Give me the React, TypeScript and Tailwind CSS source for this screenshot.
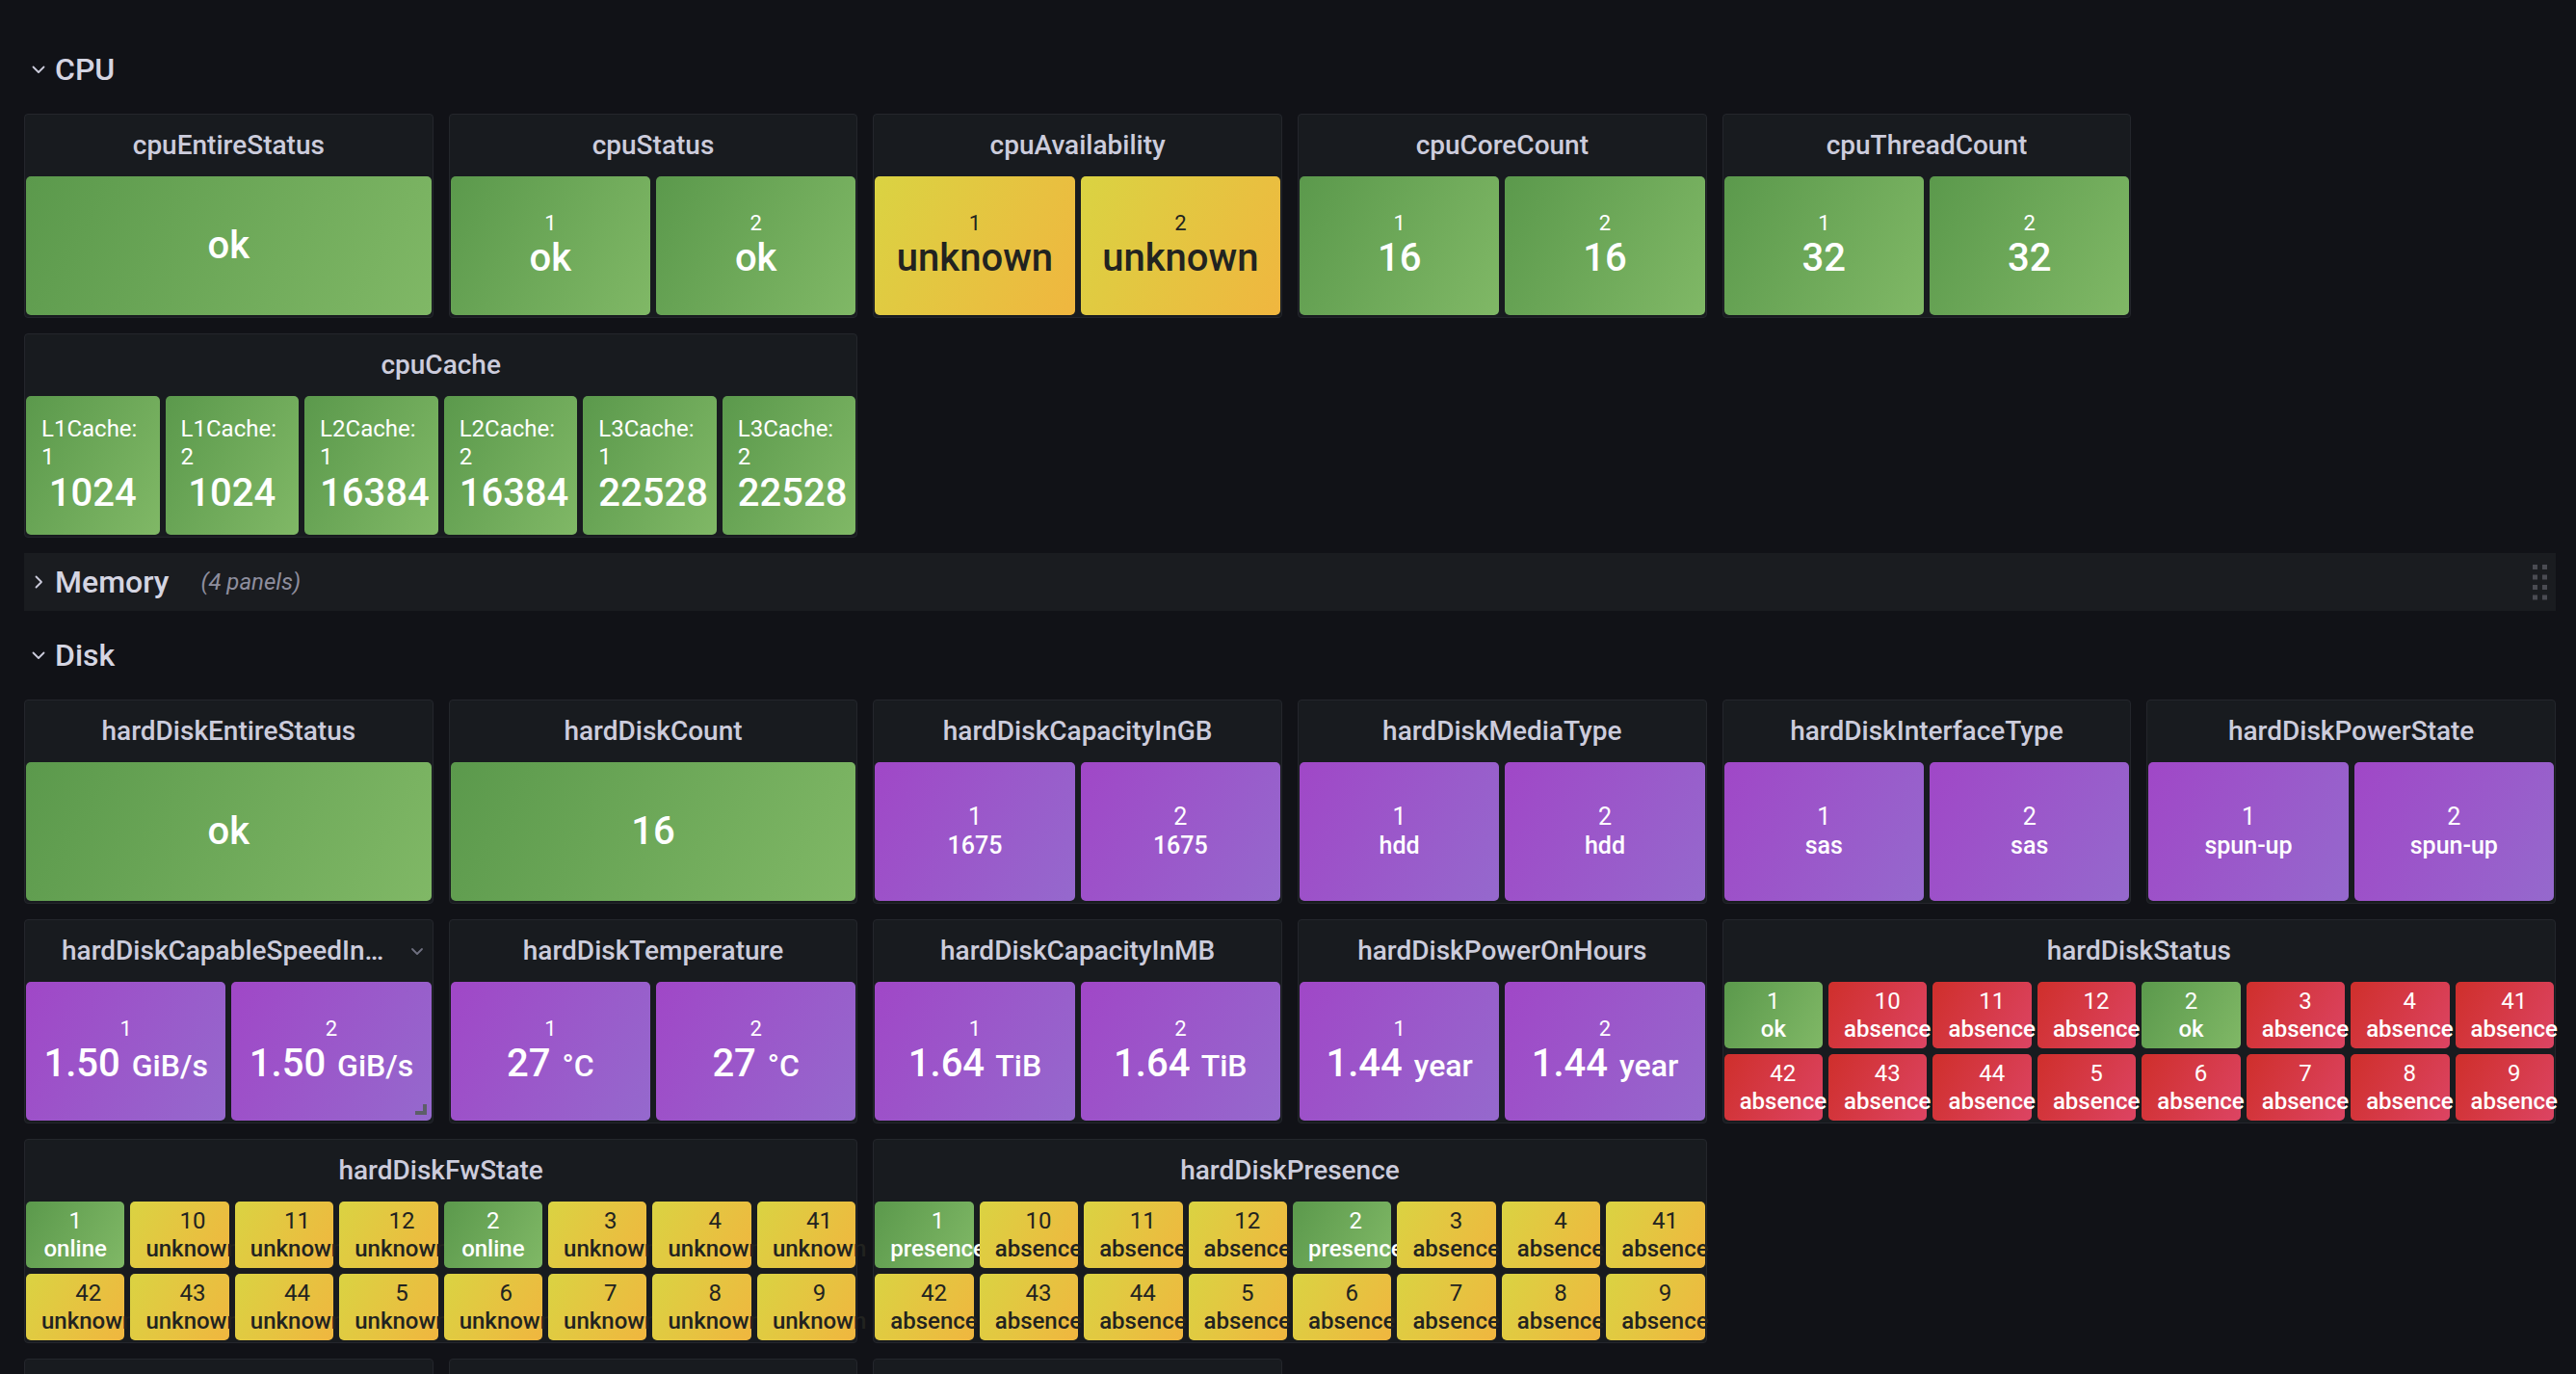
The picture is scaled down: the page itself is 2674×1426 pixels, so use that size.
import React from "react";

type C = "g" | "y" | "p" | "r";

const TILE_BG: Record<C, string> = {
  g: "bg-[linear-gradient(120deg,#5b994c,#80b866)] text-white",
  y: "bg-[linear-gradient(120deg,#dad342,#f0b63f)] text-[#222320]",
  p: "bg-[linear-gradient(120deg,#a047c7,#9569cd)] text-white",
  r: "bg-[linear-gradient(120deg,#cf2f2b,#dc4463)] text-white",
};

type TileData = { n?: string; v: string; u?: string; c: C };
type Size = { name: string; value: string; unit?: string };

const S_BIG: Size = {
  name: "text-[22px] leading-[1.15]",
  value: "text-[40px] leading-[1.15]",
  unit: "text-[32px]",
};
const S_CACHE: Size = {
  name: "text-[24px] leading-[1.2]",
  value: "text-[40px] leading-[1.15]",
};
const S_MID: Size = {
  name: "text-[25px] leading-[1.2]",
  value: "text-[25px] leading-[1.2]",
};
const S_SMALL: Size = {
  name: "text-[24px] leading-[1.2]",
  value: "text-[24px] leading-[1.2]",
};

function Tile({ t, s }: { t: TileData; s: Size }) {
  return (
    <div
      className={`relative flex min-w-0 flex-col justify-center rounded-[5px] px-4 [align-items:safe_center] ${TILE_BG[t.c]}`}
    >
      <div className="flex flex-col items-center">
        {t.n && <div className={s.name}>{t.n}</div>}
        <div className={`whitespace-nowrap font-medium ${s.value}`}>
          {t.v}
          {t.u && <span className={`ml-[4px] ${s.unit ?? ""}`}> {t.u}</span>}
        </div>
      </div>
    </div>
  );
}

function ChevronDownSmall() {
  return (
    <svg width="16" height="16" viewBox="0 0 16 16" className="shrink-0">
      <path d="M3 6 L8 11 L13 6" fill="none" stroke="#6f7080" strokeWidth="1.8" strokeLinecap="round" strokeLinejoin="round" />
    </svg>
  );
}

function Panel({
  title,
  span = "",
  grid = "grid-cols-2",
  tiles = [],
  size = S_BIG,
  menu = false,
  resize = false,
}: {
  title?: string;
  span?: string;
  grid?: string;
  tiles?: TileData[];
  size?: Size;
  menu?: boolean;
  resize?: boolean;
}) {
  return (
    <div className={`relative flex h-[212px] min-w-0 flex-col rounded-[4px] border border-[#24262c] bg-[#181b1f] ${span}`}>
      {menu ? (
        <div className="flex h-[63px] shrink-0 items-center justify-center pl-[38px] pr-[8px]">
          <span className="min-w-0 truncate text-[28px] font-medium text-[#ccccdc]">{title}</span>
          <span className="ml-[12px] flex shrink-0">
            <ChevronDownSmall />
          </span>
        </div>
      ) : (
        <div className="flex h-[63px] shrink-0 items-center justify-center px-4">
          <span className="truncate text-[28px] font-medium text-[#ccccdc]">{title}</span>
        </div>
      )}
      <div className="min-h-0 flex-1 px-px pb-[2px] pt-px">
        <div className={`grid h-full gap-[6px] ${grid}`}>
          {tiles.map((t, i) => (
            <Tile key={i} t={t} s={size} />
          ))}
        </div>
      </div>
      {resize && (
        <div className="absolute bottom-[8px] right-[6px] h-[11px] w-[12px] border-b-[4px] border-r-[4px] border-[#5d5e68]" />
      )}
    </div>
  );
}

function RowHeader({ title, open, count }: { title: string; open: boolean; count?: string }) {
  return (
    <div className={`relative col-span-6 flex h-[60px] items-center pl-[7px] ${open ? "" : "bg-[#1a1c20]"}`}>
      <svg width="16" height="16" viewBox="0 0 16 16" className="shrink-0">
        {open ? (
          <path d="M2.5 5.5 L8 11 L13.5 5.5" fill="none" stroke="#ccccdc" strokeWidth="1.8" strokeLinecap="round" strokeLinejoin="round" />
        ) : (
          <path d="M5.5 2.5 L11 8 L5.5 13.5" fill="none" stroke="#ccccdc" strokeWidth="1.8" strokeLinecap="round" strokeLinejoin="round" />
        )}
      </svg>
      <span className="ml-[9px] text-[32px] font-medium text-[#d5d5e2]">{title}</span>
      {count && <span className="ml-[33px] text-[24px] italic text-[#8e8e9e]">{count}</span>}
      {!open && (
        <svg width="16" height="38" viewBox="0 0 16 38" className="absolute right-[8px] top-[12px]">
          {[0, 10.5, 21, 31.5].map((y) => (
            <g key={y}>
              <rect x="0" y={y} width="5" height="5" fill="#4a4b52" />
              <rect x="10" y={y} width="5" height="5" fill="#4a4b52" />
            </g>
          ))}
        </svg>
      )}
    </div>
  );
}

const two = (v: string, c: C, u?: string): TileData[] => [
  { n: "1", v, c, u },
  { n: "2", v, c, u },
];

const statusNames = ["1", "10", "11", "12", "2", "3", "4", "41", "42", "43", "44", "5", "6", "7", "8", "9"];

const diskStatus: TileData[] = statusNames.map((n) =>
  n === "1" || n === "2" ? { n, v: "ok", c: "g" } : { n, v: "absence", c: "r" }
);
const fwState: TileData[] = statusNames.map((n) =>
  n === "1" || n === "2" ? { n, v: "online", c: "g" } : { n, v: "unknown", c: "y" }
);
const presence: TileData[] = statusNames.map((n) =>
  n === "1" || n === "2" ? { n, v: "presence", c: "g" } : { n, v: "absence", c: "y" }
);

const cache: TileData[] = [
  { n: "L1Cache: 1", v: "1024", c: "g" },
  { n: "L1Cache: 2", v: "1024", c: "g" },
  { n: "L2Cache: 1", v: "16384", c: "g" },
  { n: "L2Cache: 2", v: "16384", c: "g" },
  { n: "L3Cache: 1", v: "22528", c: "g" },
  { n: "L3Cache: 2", v: "22528", c: "g" },
];

export default function App() {
  return (
    <div className="h-[1426px] w-full overflow-hidden bg-[#111217] font-[Roboto]">
      <div className="grid grid-cols-6 gap-4 pl-[25px] pr-[21px] pt-[42px]">
        <RowHeader title="CPU" open />
        <Panel title="cpuEntireStatus" grid="grid-cols-1" tiles={[{ v: "ok", c: "g" }]} />
        <Panel title="cpuStatus" tiles={two("ok", "g")} />
        <Panel title="cpuAvailability" tiles={two("unknown", "y")} />
        <Panel title="cpuCoreCount" tiles={two("16", "g")} />
        <Panel title="cpuThreadCount" tiles={two("32", "g")} />
        <Panel title="cpuCache" span="col-span-2 col-start-1" grid="grid-cols-6" tiles={cache} size={S_CACHE} />

        <RowHeader title="Memory" open={false} count="(4 panels)" />
        <RowHeader title="Disk" open />

        <Panel title="hardDiskEntireStatus" grid="grid-cols-1" tiles={[{ v: "ok", c: "g" }]} />
        <Panel title="hardDiskCount" grid="grid-cols-1" tiles={[{ v: "16", c: "g" }]} />
        <Panel title="hardDiskCapacityInGB" tiles={two("1675", "p")} size={S_MID} />
        <Panel title="hardDiskMediaType" tiles={two("hdd", "p")} size={S_MID} />
        <Panel title="hardDiskInterfaceType" tiles={two("sas", "p")} size={S_MID} />
        <Panel title="hardDiskPowerState" tiles={two("spun-up", "p")} size={S_MID} />

        <Panel title="hardDiskCapableSpeedInMbps" tiles={two("1.50", "p", "GiB/s")} menu resize />
        <Panel title="hardDiskTemperature" tiles={two("27", "p", "°C")} />
        <Panel title="hardDiskCapacityInMB" tiles={two("1.64", "p", "TiB")} />
        <Panel title="hardDiskPowerOnHours" tiles={two("1.44", "p", "year")} />
        <Panel title="hardDiskStatus" span="col-span-2" grid="grid-cols-8 grid-rows-2" tiles={diskStatus} size={S_SMALL} />

        <Panel title="hardDiskFwState" span="col-span-2" grid="grid-cols-8 grid-rows-2" tiles={fwState} size={S_SMALL} />
        <Panel title="hardDiskPresence" span="col-span-2" grid="grid-cols-8 grid-rows-2" tiles={presence} size={S_SMALL} />
        <div className="col-span-2" />

        <Panel title="" />
        <Panel title="" />
        <Panel title="" />
      </div>
    </div>
  );
}
